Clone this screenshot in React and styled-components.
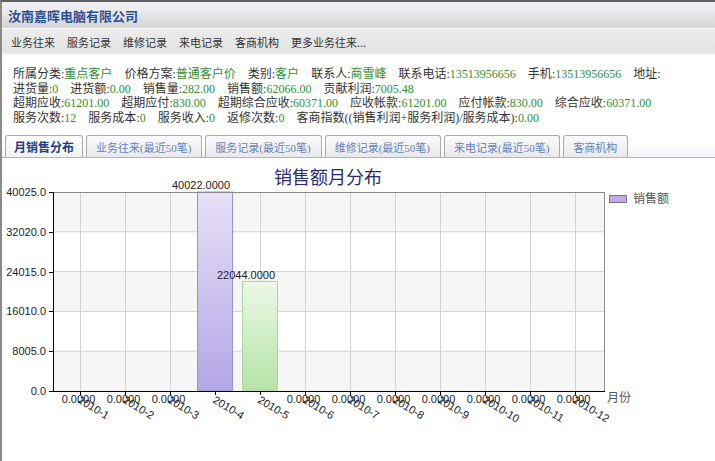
import React from "react";
import styled, { createGlobalStyle } from "styled-components";

const GlobalStyle = createGlobalStyle`
  html, body { margin: 0; padding: 0; background: #fff; overflow: hidden; }
  body { font-family: "Liberation Serif", "Noto Sans CJK SC", serif; }
`;

const Frame = styled.div`
  height: 461px;
  box-sizing: border-box;
  border-left: 2px solid #8a8a8a;
  border-top: 2px solid #606060;
  display: flex;
  flex-direction: column;
`;

const TitleBar = styled.div`
  height: 26px;
  flex: none;
  display: flex;
  align-items: center;
  padding-left: 6px;
  background: linear-gradient(#ececf1, #f0f0f3 15%, #d5d5d5);
  border-bottom: 1px solid #ffffff;
`;

const Title = styled.h1`
  margin: 0;
  font-family: "Noto Sans CJK SC", sans-serif;
  font-size: 13px;
  font-weight: 700;
  color: #2c5096;
  letter-spacing: 0;
`;

const MenuBar = styled.nav`
  height: 26px;
  flex: none;
  display: flex;
  align-items: center;
  gap: 12px;
  padding-left: 9px;
  background: linear-gradient(#ececec, #e4e4e4 85%, #f2f2f2);
`;

const MenuItem = styled.span`
  font-family: "Noto Sans CJK SC", sans-serif;
  font-size: 11px;
  color: #333;
  white-space: nowrap;
`;

const Info = styled.div`
  padding: 12px 0 0 11px;
  font-size: 12px;
  line-height: 14.5px;
  flex: none;
`;

const Line = styled.div`
  white-space: nowrap;
`;

const Item = styled.span`
  margin-right: 12px;
  color: #333;
`;

const Value = styled.span`
  color: #2f8f2f;
`;

const TabBar = styled.div`
  margin-top: 10px;
  height: 22px;
  flex: none;
  display: flex;
  align-items: flex-end;
  gap: 3px;
  padding-left: 3px;
  border-bottom: 1px solid #9db9df;
  background: linear-gradient(#ffffff 40%, #f0f3f8);
`;

const Tab = styled.div`
  height: 22px;
  box-sizing: border-box;
  display: flex;
  align-items: center;
  padding: ${(p) => (p.$active ? "0 8px" : "0 10px 0 9px")};
  border: 1px solid #ababab;
  border-bottom: none;
  border-radius: 3px 3px 0 0;
  background: ${(p) =>
    p.$active
      ? "linear-gradient(#ffffff, #f2f2f2)"
      : "linear-gradient(#fbfbfb, #e9e9e9)"};
  font-size: ${(p) => (p.$active ? "12px" : "11px")};
  font-weight: ${(p) => (p.$active ? 700 : 400)};
  color: ${(p) => (p.$active ? "#1d3f82" : "#6283be")};
  white-space: nowrap;
`;

const ChartWrap = styled.div`
  flex: 1;
  overflow: hidden;
`;

const ChartSvg = styled.svg`
  display: block;
`;

const infoLines = [
  [
    ["所属分类", "重点客户"],
    ["价格方案", "普通客户价"],
    ["类别", "客户"],
    ["联系人", "商雪峰"],
    ["联系电话", "13513956656"],
    ["手机", "13513956656"],
    ["地址", ""],
  ],
  [
    ["进货量", "0"],
    ["进货额", "0.00"],
    ["销售量", "282.00"],
    ["销售额", "62066.00"],
    ["贡献利润", "7005.48"],
  ],
  [
    ["超期应收", "61201.00"],
    ["超期应付", "830.00"],
    ["超期综合应收", "60371.00"],
    ["应收帐款", "61201.00"],
    ["应付帐款", "830.00"],
    ["综合应收", "60371.00"],
  ],
  [
    ["服务次数", "12"],
    ["服务成本", "0"],
    ["服务收入", "0"],
    ["返修次数", "0"],
    ["客商指数((销售利润+服务利润)/服务成本)", "0.00"],
  ],
];

const menus = ["业务往来", "服务记录", "维修记录", "来电记录", "客商机构", "更多业务往来..."];
const tabs = [
  "月销售分布",
  "业务往来(最近50笔)",
  "服务记录(最近50笔)",
  "维修记录(最近50笔)",
  "来电记录(最近50笔)",
  "客商机构",
];

const values = [0, 0, 0, 40022, 22044, 0, 0, 0, 0, 0, 0, 0];
const MAX = 40025;
const TOP = 192;
const BOTTOM = 391;
const LEFT = 53;
const RIGHT = 604;
const H = BOTTOM - TOP;
const tickX = (i) => 80 + 45 * i;
const levels = [0, 8005, 16010, 24015, 32020, 40025];
const yOf = (v) => BOTTOM - (v / MAX) * H;

function Chart() {
  const bandH = H / 5;
  return (
    <ChartSvg width="713" height="303" viewBox="0 0 713 303">
      <defs>
        <linearGradient id="purple" x1="0" y1="0" x2="0" y2="1">
          <stop offset="0" stopColor="#e7e0f7" />
          <stop offset="1" stopColor="#b3a6e6" />
        </linearGradient>
        <linearGradient id="green" x1="0" y1="0" x2="0" y2="1">
          <stop offset="0" stopColor="#ecf8e8" />
          <stop offset="1" stopColor="#b5e3a5" />
        </linearGradient>
      </defs>
      <g transform="translate(-2 -158)">
        <text
          x="328"
          y="184"
          textAnchor="middle"
          fontFamily="Noto Sans CJK SC, sans-serif"
          fontSize="18"
          fill="#2b2b72"
        >
          销售额月分布
        </text>

        {[0, 1, 2, 3, 4].map((k) => (
          <rect
            key={k}
            x={LEFT}
            y={TOP + k * bandH}
            width={RIGHT - LEFT}
            height={bandH}
            fill={k % 2 === 0 ? "#f6f6f6" : "#ffffff"}
          />
        ))}
        {levels.slice(1, 5).map((v) => (
          <line key={v} x1={LEFT} x2={RIGHT} y1={yOf(v)} y2={yOf(v)} stroke="#d2d2d2" strokeWidth="1" />
        ))}
        {values.map((_, i) => (
          <line key={i} x1={tickX(i) + 0.5} x2={tickX(i) + 0.5} y1={TOP} y2={BOTTOM} stroke="#d2d2d2" strokeWidth="1" />
        ))}

        <rect x="197.5" y={yOf(40022)} width="35" height={BOTTOM - yOf(40022)} fill="url(#purple)" stroke="#9d92cc" strokeWidth="1" />
        <rect x="242.5" y={yOf(22044)} width="35" height={BOTTOM - yOf(22044)} fill="url(#green)" stroke="#a9d6a0" strokeWidth="1" />

        <line x1={LEFT} x2={RIGHT} y1={TOP + 0.5} y2={TOP + 0.5} stroke="#8a8a8a" />
        <line x1={RIGHT + 0.5} x2={RIGHT + 0.5} y1={TOP} y2={BOTTOM} stroke="#8a8a8a" />
        <line x1={LEFT + 0.5} x2={LEFT + 0.5} y1={TOP} y2={BOTTOM + 1} stroke="#000" />
        <line x1={LEFT} x2={RIGHT + 1} y1={BOTTOM + 0.5} y2={BOTTOM + 0.5} stroke="#000" />

        <g fontFamily="Liberation Sans, Arial, sans-serif" fontSize="11" fill="#222">
          {levels.map((v) => (
            <g key={v}>
              <line x1="49" x2={LEFT} y1={Math.round(yOf(v)) + 0.5} y2={Math.round(yOf(v)) + 0.5} stroke="#000" />
              <text x="46" y={yOf(v) + 4} textAnchor="end">
                {v.toFixed(1)}
              </text>
            </g>
          ))}
          {values.map((v, i) => (
            <line key={i} x1={tickX(i) + 0.5} x2={tickX(i) + 0.5} y1={BOTTOM} y2={BOTTOM + 4} stroke="#000" />
          ))}
          {values.map((v, i) =>
            v === 0 ? (
              <text key={i} x={tickX(i) - 1.5} y="403" textAnchor="middle">
                0.0000
              </text>
            ) : null
          )}
          <text x="201" y="189" textAnchor="middle">40022.0000</text>
          <text x="246" y="278.5" textAnchor="middle">22044.0000</text>
          {values.map((_, i) => (
            <text key={i} transform={`translate(${tickX(i) - 3} 402) rotate(31)`} fill="#222">
              {`2010-${i + 1}`}
            </text>
          ))}
        </g>

        <text x="607" y="402" fontFamily="Noto Sans CJK SC, sans-serif" fontSize="12" fill="#555">
          月份
        </text>

        <rect x="609.5" y="195.5" width="17" height="7" fill="#c9a7df" stroke="#7a7a7a" />
        <text x="633" y="202.5" fontFamily="Noto Sans CJK SC, sans-serif" fontSize="12" fill="#555">
          销售额
        </text>
      </g>
    </ChartSvg>
  );
}

export default function App() {
  return (
    <>
      <GlobalStyle />
      <Frame>
        <TitleBar>
          <Title>汝南嘉晖电脑有限公司</Title>
        </TitleBar>
        <MenuBar>
          {menus.map((m) => (
            <MenuItem key={m}>{m}</MenuItem>
          ))}
        </MenuBar>
        <Info>
          {infoLines.map((line, li) => (
            <Line key={li}>
              {line.map(([label, value]) => (
                <Item key={label}>
                  {label}:<Value>{value}</Value>
                </Item>
              ))}
            </Line>
          ))}
        </Info>
        <TabBar>
          {tabs.map((t, i) => (
            <Tab key={t} $active={i === 0}>
              {t}
            </Tab>
          ))}
        </TabBar>
        <ChartWrap>
          <Chart />
        </ChartWrap>
      </Frame>
    </>
  );
}
